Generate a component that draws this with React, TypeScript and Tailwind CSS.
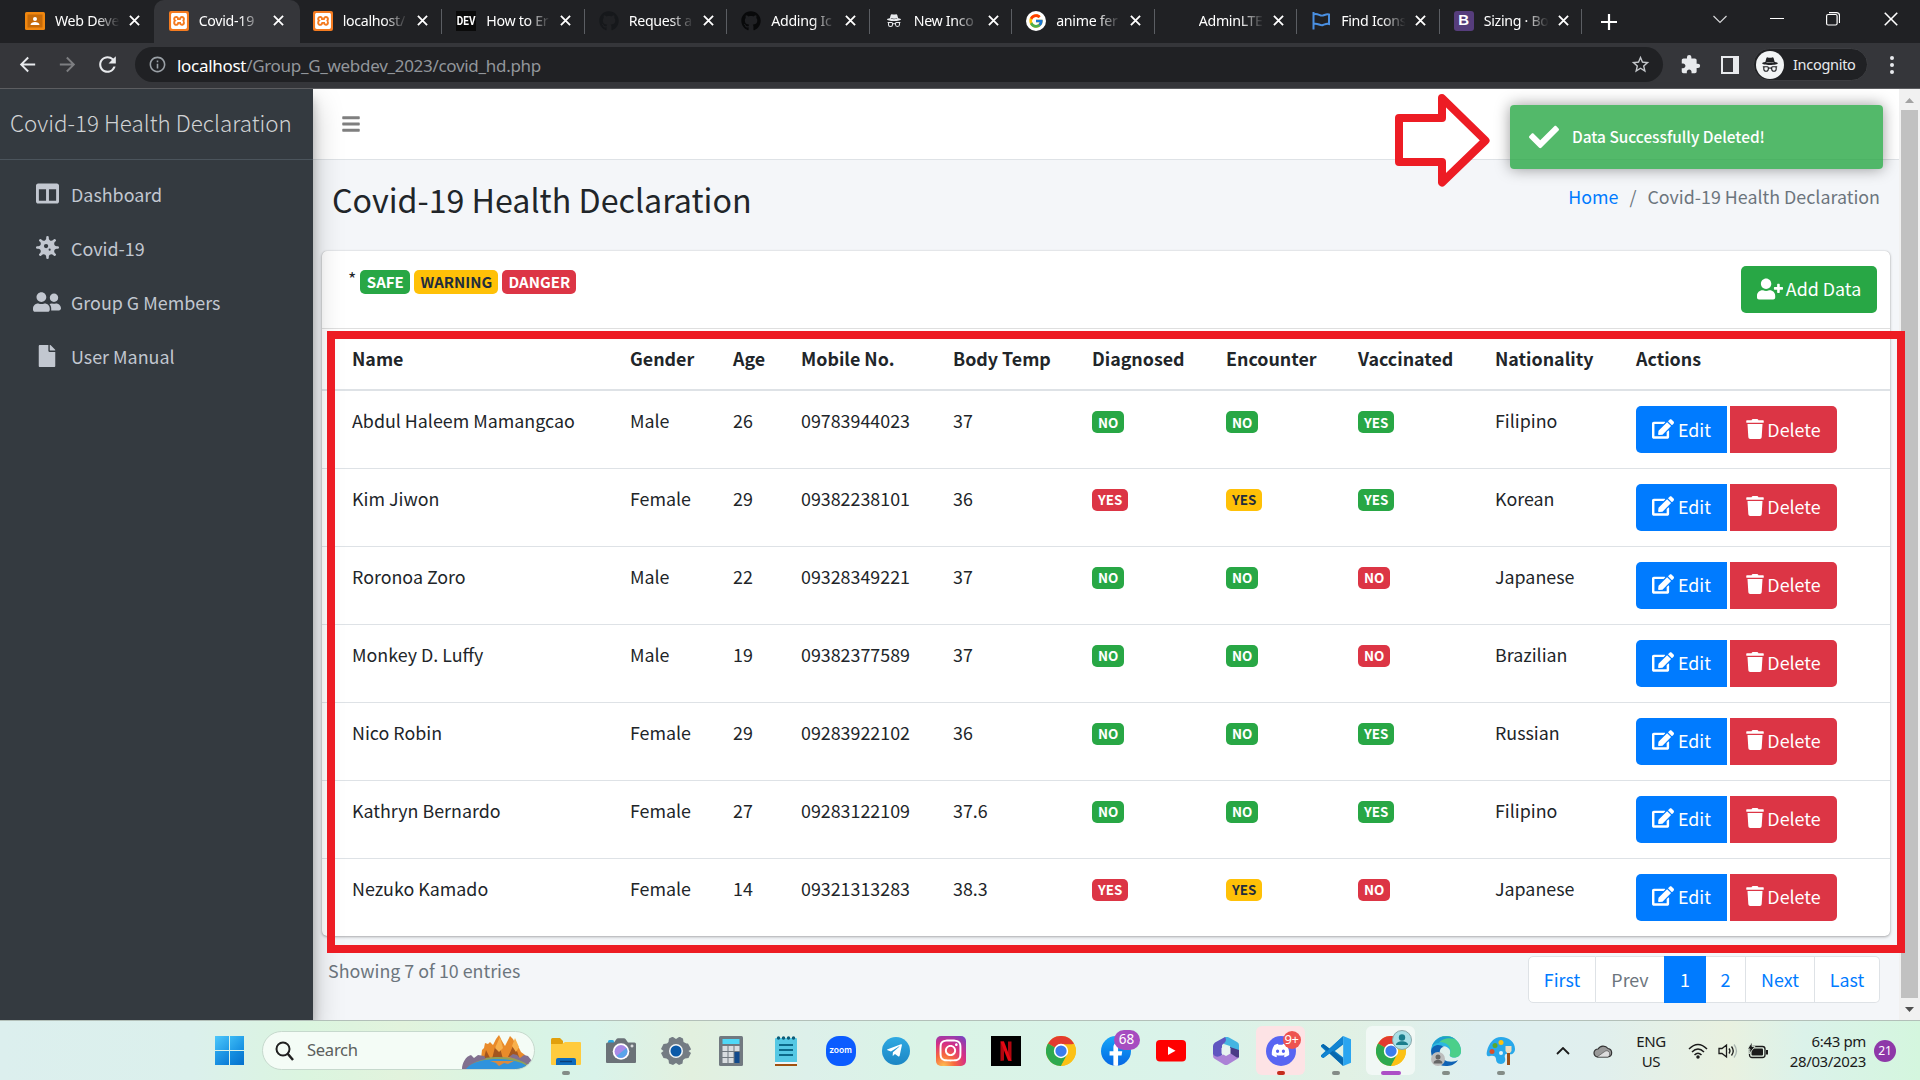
import React from "react";
import { FaBars, FaCheck, FaColumns, FaDiscord, FaEdit, FaFile, FaGithub, FaInstagram, FaTelegramPlane, FaTrash, FaUserFriends, FaUserPlus, FaVirus, FaFacebookF } from "react-icons/fa";
import { FcGoogle } from "react-icons/fc";
import { BsIncognito } from "react-icons/bs";
import { MdExtension, MdStarBorder, MdArrowBack, MdArrowForward, MdRefresh, MdInfoOutline } from "react-icons/md";
import { SiXampp } from "react-icons/si";
import { VscChromeClose } from "react-icons/vsc";

/* ---------- Browser chrome ---------- */

const XamppIcon = () => (
  <span className="flex size-5 items-center justify-center rounded-[2px] bg-[#f47b20]">
    <SiXampp className="size-4 text-white" />
  </span>
);

const tabs: { title: string; icon: React.ReactNode; divider?: boolean; active?: boolean }[] = [
  {
    title: "Web Deve",
    icon: (
      <svg viewBox="0 0 20 20" className="size-5">
        <rect y="1" width="20" height="18" rx="1.5" fill="#f0870f" />
        <rect x="2.5" y="3.500" width="15" height="13" fill="#c66a08" />
        <circle cx="10" cy="8" r="2" fill="#fff" />
        <path d="M5.500 14c0-4 9-4 9 0z" fill="#fff" />
      </svg>
    ),
  },
  { title: "Covid-19", icon: <XamppIcon />, active: true },
  { title: "localhost/", icon: <XamppIcon />, divider: true },
  {
    title: "How to Er",
    icon: (
      <span className="flex size-5 items-center justify-center bg-[#0a0a0a] font-['Liberation_Sans_Narrow','Roboto'] text-[10px] font-bold text-white">
        <span className="scale-y-125">DEV</span>
      </span>
    ),
    divider: true,
  },
  { title: "Request a", icon: <FaGithub className="size-5 text-[#16181b]" />, divider: true },
  { title: "Adding Ic", icon: <FaGithub className="size-5 text-[#08090a]" />, divider: true },
  { title: "New Inco", icon: <BsIncognito className="size-4 text-[#e8eaed]" />, divider: true },
  {
    title: "anime fer",
    icon: (
      <span className="flex size-5 items-center justify-center rounded-full bg-white">
        <FcGoogle className="size-4" />
      </span>
    ),
    divider: true,
  },
  { title: "AdminLTE", icon: null, divider: true },
  {
    title: "Find Icons",
    icon: (
      <svg viewBox="0 0 20 20" className="size-5" fill="none" stroke="#4a90e2" strokeWidth="2">
        <path d="M2.500 1v17.500M2.500 3.500c4-2 6.500 2 9.500 1s3.500-1.500 6-1v9.500c-3-.5-3 0-6 1s-5.500-2.500-9.500-1" />
      </svg>
    ),
    divider: true,
  },
  {
    title: "Sizing · Bo",
    icon: (
      <span className="flex size-5 items-center justify-center rounded-[3px] bg-[#563d7c] font-['Liberation_Sans'] text-[15px] font-bold text-white">B</span>
    ),
    divider: true,
  },
];

function TabStrip() {
  return (
    <div className="flex h-[43px] items-center bg-[#202124] pl-[13px] text-white">
      {tabs.map((t, i) => (
        <div
          key={t.title}
          className={
            "relative flex h-full shrink-0 items-center pb-[2px] " +
            (t.active
              ? "-ml-[2px] w-[146px] rounded-t-[10px] bg-[#35363a] pl-[15px]"
              : i === 0
                ? "w-[142.7px] pl-[12px]"
                : i === 2
                  ? "w-[142.5px] pl-[13px]"
                  : "w-[142.5px] pl-[14px]")
          }
        >
          <span className="flex size-5 shrink-0 items-center justify-center">{t.icon}</span>
          <span className="ml-[10px] w-[66px] overflow-hidden whitespace-nowrap font-['Noto_Sans'] text-[14.2px] tracking-[-0.3px] [mask-image:linear-gradient(to_right,black_62%,transparent_98%)]">
            {t.title}
          </span>
          <svg viewBox="0 0 12 12" className="ml-[8px] size-[11px] shrink-0" stroke="#fff" strokeWidth="2">
            <path d="M1 1l10 10M11 1L1 11" />
          </svg>
          {t.divider && <span className="absolute right-0 top-[9px] h-[25px] w-px bg-[#5b5e63]" />}
        </div>
      ))}
      <svg viewBox="0 0 16 16" className="ml-[19px] size-[16px]" stroke="#fff" strokeWidth="2.200">
        <path d="M8 0v16M0 8h16" />
      </svg>
      <div className="ml-auto mb-[6px] flex items-center pr-[19px]">
        <svg viewBox="0 0 14 14" className="w-[14px]" fill="none" stroke="#d5d6d8" strokeWidth="1.200">
          <path d="M.5 4L7 10.500 13.500 4" />
        </svg>
        <span className="ml-[43px] h-px w-[14px] bg-white" />
        <svg viewBox="0 0 14 14" className="ml-[42px] size-[14px]" fill="none" stroke="#fff" strokeWidth="1.200">
          <rect x=".6" y="2.500" width="10.500" height="10.500" rx="1.500" />
          <path d="M3 .6h7.500c2 0 3 1 3 3V11" />
        </svg>
        <VscChromeClose className="ml-[41px] size-[20px]" />
      </div>
    </div>
  );
}

function Toolbar() {
  return (
    <div className="flex h-[46px] items-center border-b border-[#5c5d60] bg-[#35363a] pb-[3px] pt-px font-['Noto_Sans'] text-[#e8eaed]">
      <MdArrowBack className="ml-[16px] size-[23px]" />
      <MdArrowForward className="ml-[17px] size-[23px] text-[#7d7e81]" />
      <MdRefresh className="ml-[16px] size-[25px]" />
      <div className="ml-[15px] flex h-[35px] w-[1528px] items-center rounded-full bg-[#202124] pl-[13px] pr-[12px]">
        <MdInfoOutline className="size-[19px] text-[#9aa0a6]" />
        <div className="ml-[10px] pt-[2px] text-[17px] leading-none tracking-[-0.3px] text-[#92969b]">
          <span className="text-white">localhost</span>/Group_G_webdev_2023/covid_hd.php
        </div>
        <MdStarBorder className="ml-auto size-[21px] text-[#c4c7cb]" />
      </div>
      <MdExtension className="ml-[17px] size-[21px]" />
      <span className="ml-[20px] flex h-[18px] w-[18px] border-[2.5px] border-r-[6px] border-[#e8eaed]" />
      <div className="ml-[14px] flex h-[33px] w-[115px] items-center rounded-full border border-[#3c3d41] bg-[#202124] pl-[2px]">
        <span className="flex size-[28px] items-center justify-center rounded-full bg-[#f1f3f4] text-[#202124]">
          <BsIncognito className="size-[18px]" />
        </span>
        <span className="ml-[9px] text-[14.5px] tracking-[-0.3px]">Incognito</span>
      </div>
      <div className="ml-[22px] flex flex-col gap-[3px]">
        <span className="size-[4px] rounded-full bg-current" />
        <span className="size-[4px] rounded-full bg-current" />
        <span className="size-[4px] rounded-full bg-current" />
      </div>
    </div>
  );
}

/* ---------- Page ---------- */

const nav = [
  { label: "Dashboard", icon: <FaColumns className="size-[23px]" /> },
  { label: "Covid-19", icon: <FaVirus className="size-[23px]" /> },
  { label: "Group G Members", icon: <FaUserFriends className="size-[28px]" /> },
  { label: "User Manual", icon: <FaFile className="size-[22px]" /> },
];

function Sidebar() {
  return (
    <aside className="relative z-10 flex w-[313px] shrink-0 flex-col bg-[#343a40] text-[#c2c7d0] shadow-[0_14px_28px_rgba(0,0,0,0.25),0_10px_10px_rgba(0,0,0,0.22)]">
      <div className="flex h-[71px] items-center whitespace-nowrap border-b border-[#4b545c] pb-[2px] pl-[10px] text-[22.4px] font-light text-[#d0d2d4]">
        Covid-19 Health Declaration
      </div>
      <nav className="flex flex-col pt-[8px]">
        {nav.map((n) => (
          <div key={n.label} className="flex h-[54px] items-center pl-[29px]">
            <span className="mb-[3px] flex w-[36px] justify-center">{n.icon}</span>
            <span className="mb-[2px] ml-[6px] text-[17.9px]">{n.label}</span>
          </div>
        ))}
      </nav>
    </aside>
  );
}

type Tone = "g" | "y" | "r";
const tones: Record<Tone, string> = {
  g: "bg-[#28a745] text-white",
  y: "bg-[#ffc107] text-[#1f2d3d]",
  r: "bg-[#dc3545] text-white",
};

const rows: [string, string, string, string, string, Tone, Tone, Tone, string][] = [
  ["Abdul Haleem Mamangcao", "Male", "26", "09783944023", "37", "g", "g", "g", "Filipino"],
  ["Kim Jiwon", "Female", "29", "09382238101", "36", "r", "y", "g", "Korean"],
  ["Roronoa Zoro", "Male", "22", "09328349221", "37", "g", "g", "r", "Japanese"],
  ["Monkey D. Luffy", "Male", "19", "09382377589", "37", "g", "g", "r", "Brazilian"],
  ["Nico Robin", "Female", "29", "09283922102", "36", "g", "g", "g", "Russian"],
  ["Kathryn Bernardo", "Female", "27", "09283122109", "37.6", "g", "g", "g", "Filipino"],
  ["Nezuko Kamado", "Female", "14", "09321313283", "38.3", "r", "y", "r", "Japanese"],
];

const heads = ["Name", "Gender", "Age", "Mobile No.", "Body Temp", "Diagnosed", "Encounter", "Vaccinated", "Nationality", "Actions"];

function Badge({ tone, children }: { tone: Tone; children: React.ReactNode }) {
  return (
    <span className={"mt-[2px] flex h-[22px] w-fit items-center rounded-[5px] px-[6px] pt-px text-[13.4px] font-bold leading-none " + tones[tone]}>
      {children}
    </span>
  );
}

function DataTable() {
  return (
    <table className="w-full table-fixed border-collapse text-left text-[17.85px] leading-[30px]">
      <colgroup>
        <col className="w-[293px]" />
        <col className="w-[103px]" />
        <col className="w-[68px]" />
        <col className="w-[152px]" />
        <col className="w-[139px]" />
        <col className="w-[134px]" />
        <col className="w-[132px]" />
        <col className="w-[137px]" />
        <col className="w-[141px]" />
        <col />
      </colgroup>
      <thead>
        <tr className="h-[61px] border-b-2 border-[#dee2e6]">
          {heads.map((h) => (
            <th key={h} className="pl-[15px] align-top pt-[14px] font-bold first:pl-[30px]">
              {h}
            </th>
          ))}
        </tr>
      </thead>
      <tbody>
        {rows.map(([name, gender, age, mobile, temp, d, e, v, nat]) => (
          <tr key={name} className="h-[78px] border-t border-[#dee2e6] align-top">
            <td className="pl-[30px] pt-[14px]">{name}</td>
            <td className="pl-[15px] pt-[14px]">{gender}</td>
            <td className="pl-[15px] pt-[14px]">{age}</td>
            <td className="pl-[15px] pt-[14px]">{mobile}</td>
            <td className="pl-[15px] pt-[14px]">{temp}</td>
            <td className="pl-[15px] pt-[18px]"><Badge tone={d}>{d === "g" ? "NO" : "YES"}</Badge></td>
            <td className="pl-[15px] pt-[18px]"><Badge tone={e}>{e === "g" ? "NO" : "YES"}</Badge></td>
            <td className="pl-[15px] pt-[18px]"><Badge tone={v}>{v === "g" ? "YES" : "NO"}</Badge></td>
            <td className="pl-[15px] pt-[14px]">{nat}</td>
            <td className="pl-[15px] pt-[15px]">
              <div className="flex gap-[3px] text-white">
                <button className="flex h-[47px] w-[91px] items-center justify-center gap-[4px] rounded-l-[5px] bg-[#007bff] pb-[2px]">
                  <FaEdit className="size-[22px]" />Edit
                </button>
                <button className="flex h-[47px] w-[107px] items-center justify-center gap-[3px] rounded-r-[5px] bg-[#dc3545] pb-[2px]">
                  <FaTrash className="h-[20px] w-[18px]" />Delete
                </button>
              </div>
            </td>
          </tr>
        ))}
      </tbody>
    </table>
  );
}

function Content() {
  return (
    <main className="flex min-w-0 flex-1 flex-col bg-[#f4f6f9] text-[17.85px] text-[#212529]">
      <header className="flex h-[71px] shrink-0 items-center border-b border-[#dee2e6] bg-white pl-[28px]">
        <FaBars className="size-[20px] text-[#7f7f7f]" />
      </header>
      <div className="flex h-[91px] items-start justify-between pl-[19px] pr-[19px] pt-[17px]">
        <h1 className="text-[32.2px] leading-[44px]">Covid-19 Health Declaration</h1>
        <div className="flex gap-[11px] leading-[38px] text-[#6c757d]">
          <span className="text-[#007bff]">Home</span>
          <span>/</span>
          <span>Covid-19 Health Declaration</span>
        </div>
      </div>
      <section className="ml-[9px] w-[1568px] rounded-[5px] bg-white shadow-[0_0_1px_rgba(0,0,0,0.25),0_1px_3px_rgba(0,0,0,0.3)]">
        <div className="flex h-[78px] items-start border-b border-[#dfdfdf] pl-[26px] pr-[13px] pt-[15px]">
          <span className="mr-[4px] -mt-[3px] leading-[30px]">*</span>
          <div className="mt-[4px] flex gap-[4px] text-[15px] font-bold leading-none">
            <span className="flex h-[24px] w-[50px] items-center justify-center rounded-[5px] bg-[#28a745] pb-px text-white">SAFE</span>
            <span className="flex h-[24px] w-[84px] items-center justify-center rounded-[5px] bg-[#ffc107] pb-px text-[#1f2d3d]">WARNING</span>
            <span className="flex h-[24px] w-[74px] items-center justify-center rounded-[5px] bg-[#dc3545] pb-px text-white">DANGER</span>
          </div>
          <button className="ml-auto flex h-[47px] w-[136px] items-center justify-center gap-[3px] rounded-[5px] bg-[#28a745] pb-[2px] text-white">
            <FaUserPlus className="size-[26px]" />Add Data
          </button>
        </div>
        <DataTable />
      </section>
      <div className="flex justify-between pl-[15px] pr-[19px] pt-[20px]">
        <span className="-mt-[2px] leading-[32px] text-[#6c757d]">Showing 7 of 10 entries</span>
        <div className="flex h-[47px] text-[#007bff]">
          <span className="flex w-[68px] items-center justify-center rounded-l-[5px] border border-[#dee2e6] bg-white">First</span>
          <span className="flex w-[68px] items-center justify-center border-y border-[#dee2e6] bg-white text-[#6c757d]">Prev</span>
          <span className="flex w-[42px] items-center justify-center bg-[#007bff] text-white">1</span>
          <span className="flex w-[40px] items-center justify-center border-y border-r border-[#dee2e6] bg-white">2</span>
          <span className="flex w-[69px] items-center justify-center border-y border-r border-[#dee2e6] bg-white">Next</span>
          <span className="flex w-[65px] items-center justify-center rounded-r-[5px] border-y border-r border-[#dee2e6] bg-white">Last</span>
        </div>
      </div>
    </main>
  );
}

function Scrollbar() {
  return (
    <div className="flex w-[21px] flex-col items-center bg-[#f1f1f1]">
      <svg viewBox="0 0 21 21" className="h-[21px] w-[21px]"><path d="M6 14l4.500-5 4.500 5z" fill="#a3a3a3" /></svg>
      <div className="h-[888px] w-[17px] bg-[#c1c1c1]" />
      <svg viewBox="0 0 21 21" className="h-[21px] w-[21px]"><path d="M6 9l4.500 5L15 9z" fill="#505050" /></svg>
    </div>
  );
}

/* ---------- Taskbar ---------- */

const ChromeIcon = () => (
  <svg viewBox="0 0 48 48" className="size-[30px]">
    <circle cx="24" cy="24" r="24" fill="#fbc116" />
    <path d="M24 24L3.200 12A24 24 0 0 1 44.800 12z" fill="#e33b2e" />
    <path d="M24 24L3.200 12A24 24 0 0 0 24 48L34.400 30z" fill="#2da94f" />
    <path d="M24 13h21.300A24 24 0 0 1 24 48l9.500-18.500z" fill="#fbc116" />
    <circle cx="24" cy="24" r="11.500" fill="#fff" />
    <circle cx="24" cy="24" r="9" fill="#3b7ded" />
  </svg>
);

const apps: { id: string; icon: React.ReactNode; dot?: string; tile?: string; badge?: React.ReactNode }[] = [
  {
    id: "explorer",
    dot: "w-[8px] bg-[#848c87]",
    icon: (
      <svg viewBox="0 0 30 30" className="size-[30px]">
        <path d="M0 3.500Q0 2 1.500 2H9l3 3v6H0z" fill="#e2a00c" />
        <path d="M0 8h11l3-2h15q1 0 1 1v21q0 1-1 1H1q-1 0-1-1z" fill="#ffcb3d" />
        <path d="M5 29v-5q0-2 2-2h16q2 0 2 2v5z" fill="#0f6cbd" />
        <path d="M9 25.500h12" stroke="#0a3f78" strokeWidth="1.500" />
      </svg>
    ),
  },
  {
    id: "camera",
    icon: (
      <svg viewBox="0 0 30 30" className="size-[30px]">
        <rect x="2" y="4" width="6" height="4" rx="1.500" fill="#2aa7e0" />
        <path d="M0 8q0-1.500 1.500-1.500H8L10.500 3q.5-.7 1.500-.7h6q1 0 1.500.7L22 6.500h6.500Q30 6.500 30 8v18q0 1-1 1H1q-1 0-1-1z" fill="#6b7278" />
        <circle cx="15" cy="15.500" r="8.300" fill="#fff" />
        <circle cx="15" cy="15.500" r="6.500" fill="#a98ae6" />
        <path d="M10.500 20a6.500 6.500 0 0 0 10-8z" fill="#5aa4ea" />
        <path d="M26 8.500v3M24.500 10h3" stroke="#fff" />
      </svg>
    ),
  },
  {
    id: "settings",
    icon: (
      <svg viewBox="0 0 30 30" className="size-[30px]">
        <path d="M11 1h1l3 2 3-2h1l3 1.500.5 3.500 3 1.500h1.500L29.500 12l.5 1.500-2.500 1.500 2.500 2-2.500 5-3.500.5-2 1.500-.5 3.500L18 29l-3-2-3 2-4-1.500-.5-3.500-2-1.500L2.500 22 0 17l2.500-2L0 13l2.500-5L6 7.500 7.500 6 8 2.500z" fill="#747c83" />
        <circle cx="15" cy="15" r="7" fill="#f2f5f6" />
        <circle cx="15" cy="15" r="5.500" fill="#0a59a8" />
      </svg>
    ),
  },
  {
    id: "calculator",
    icon: (
      <svg viewBox="0 0 24 30" className="h-[30px] w-[24px]">
        <rect width="24" height="30" rx="1.500" fill="#717980" />
        <rect x="3.500" y="3" width="17" height="5" fill="#4fd8f7" />
        <g fill="#d9dde0">
          <path d="M3.500 10h5v5h-5zM9.500 10h5v5h-5zM15.500 10h5v5h-5zM3.500 16h5v5h-5zM9.500 16h5v5h-5zM3.500 22h5v5h-5zM9.500 22h5v5h-5z" />
        </g>
        <path d="M15.500 16h5v11h-5z" fill="#124a8c" />
      </svg>
    ),
  },
  {
    id: "notepad",
    icon: (
      <svg viewBox="0 0 22 30" className="h-[30px] w-[22px]">
        <rect y="2" width="22" height="25" rx="1" fill="#55c8e4" />
        <path d="M0 26h22v2H0z" fill="#f2f5f6" />
        <path d="M0 28h22v2H0z" fill="#a0500f" />
        <g fill="#0c5c78"><circle cx="3.500" cy="2" r="1.700" /><circle cx="8.500" cy="2" r="1.700" /><circle cx="13.500" cy="2" r="1.700" /><circle cx="18.500" cy="2" r="1.700" /></g>
        <path d="M4 9h14M4 14h14M4 19h14" stroke="#0c6a8a" strokeWidth="2" />
      </svg>
    ),
  },
  {
    id: "zoom",
    icon: <span className="flex size-[30px] items-center justify-center rounded-[13px] bg-[#0b5cff] font-['Inter'] text-[8.500px] font-semibold leading-none text-white">zoom</span>,
  },
  {
    id: "telegram",
    icon: <span className="flex size-[28px] items-center justify-center rounded-full bg-linear-to-b from-[#2fa9e2] to-[#1c86c4]"><FaTelegramPlane className="mr-[2px] size-[17px] text-white" /></span>,
  },
  {
    id: "instagram",
    icon: <span className="flex size-[30px] items-center justify-center rounded-[5px] bg-[radial-gradient(circle_at_25%_100%,#fdc04f_0%,#f7663f_30%,#d62f86_60%,#6b45c9_100%)]"><FaInstagram className="size-[25px] text-white" /></span>,
  },
  {
    id: "netflix",
    icon: (
      <svg viewBox="0 0 30 30" className="size-[30px]">
        <rect width="30" height="30" fill="#000" />
        <path d="M9.500 5.500h3.500v19l-3.500.5zM17 5.500h3.500V25l-3.500-.5z" fill="#b1060f" />
        <path d="M9.500 5.500H13l7.500 19.500-3.500-.5z" fill="#e50914" />
      </svg>
    ),
  },
  { id: "chrome", icon: <ChromeIcon /> },
  {
    id: "facebook",
    icon: <span className="flex size-[30px] items-end justify-center overflow-hidden rounded-full bg-linear-to-b from-[#1aa7f8] to-[#0a66e4]"><FaFacebookF className="size-[24px] text-white" /></span>,
    badge: <span className="absolute right-[-9px] top-[-6px] flex h-[20px] w-[26px] items-center justify-center rounded-full bg-[#a64cc0] text-[13.5px] leading-none text-white">68</span>,
  },
  {
    id: "youtube",
    icon: (
      <svg viewBox="0 0 30 22" className="h-[22px] w-[30px]">
        <rect width="30" height="21.500" rx="4" fill="#f00" />
        <path d="M12 6.500l7.500 4.300L12 15z" fill="#fff" />
      </svg>
    ),
  },
  {
    id: "office",
    icon: (
      <svg viewBox="0 0 26 28" className="h-[28px] w-[26px]">
        <path d="M12 0q2-.5 4 .5l8 4.500q2 1 2 3v8l-9-4V9l-6-2z" fill="#45b5e2" />
        <path d="M12 0Q15 4 9 8v10l-3 3q-4 0-6-3V9q0-2 2-3.500z" fill="#5f55c0" />
        <path d="M0 17q3 5 9 1l8-4 9 3v3q0 1-2 2l-9 5.500q-2 1-4 0L2 22Q0 21 0 19z" fill="#ab82d6" />
        <path d="M17 10l9 3v7q-1 1-3 0l-6-4z" fill="#4a3a86" />
        <path d="M13 8.500l4.500 2.500v5.500L13 19 8.500 16.500V11z" fill="#e7f3f0" />
      </svg>
    ),
  },
  {
    id: "discord",
    tile: "bg-[#fde3e5]",
    dot: "w-[8px] bg-[#c42b1c]",
    icon: <span className="flex size-[30px] items-center justify-center rounded-full bg-[#5865f2]"><FaDiscord className="size-[19px] text-white" /></span>,
    badge: <span className="absolute right-[-5px] top-[-5px] flex size-[18px] items-center justify-center rounded-full bg-[#ee5350] text-[13px] leading-none tracking-[-0.5px] text-white">9+</span>,
  },
  {
    id: "vscode",
    dot: "w-[8px] bg-[#848c87]",
    icon: (
      <svg viewBox="0 0 100 100" className="size-[30px]">
        <path d="M74 0L28 42 8 27 0 31v38l8 4 20-15 46 42V72L46 50l28-22z" fill="#0a7cc8" />
        <path d="M0 31l8-4 66 50v23z" fill="#0868ae" />
        <path d="M0 69l8 4 66-50V0z" fill="#1284d2" />
        <path d="M0 36v28l15-14z" fill="#dff1ea" />
        <path d="M74 0l26 11v78l-26 11z" fill="#2aa5f0" />
      </svg>
    ),
  },
  {
    id: "chrome-active",
    tile: "bg-[#f1f8f5]",
    dot: "w-[20px] bg-[#ac4fc6]",
    icon: <ChromeIcon />,
    badge: (
      <svg viewBox="0 0 20 20" className="absolute right-[-6px] top-[-6px] size-[20px]">
        <circle cx="10" cy="10" r="9.500" fill="#a9dfe6" stroke="#8aa6a8" />
        <circle cx="10" cy="7.500" r="3.200" fill="#1a7d8c" />
        <path d="M4 15c0-5 12-5 12 0z" fill="#1a7d8c" />
      </svg>
    ),
  },
  {
    id: "edge",
    dot: "w-[8px] bg-[#848c87]",
    icon: (
      <svg viewBox="0 0 30 30" className="size-[30px]">
        <path d="M0 15a15 15 0 0 1 30 0c0 5-4 6.500-7 6.500s-5-1.500-4-3.500c1.500-5-3-8-8-8S1 12 0 15z" fill="#2bb7e0" />
        <path d="M13 0c10-1 17 7 17 15 0 5-4 6.500-7 6.500s-5-1.500-4-3.500c2-9-4-12-12-12 2-4 4-5.500 6-6z" fill="#4bcf8a" />
        <path d="M1 10C4 1 16-3 24 3 18 1 10 3 8 7c-3 0-5 1-7 3z" fill="#1f9fd0" />
        <path d="M0 15c1-6 8-8 13-4-5 0-6 8-1 12s12 3 15 1c-3 5-8 6-12 6C6 30 0 23 0 15z" fill="#0f62b4" />
      </svg>
    ),
    badge: (
      <svg viewBox="0 0 14 14" className="absolute bottom-0 left-0 size-[14px]">
        <circle cx="7" cy="7" r="7" fill="#bdbdbd" />
        <circle cx="7" cy="5" r="2.500" fill="#666" />
        <path d="M2.500 11.500c0-5 9-5 9 0z" fill="#666" />
      </svg>
    ),
  },
  {
    id: "paint",
    dot: "w-[8px] bg-[#848c87]",
    icon: (
      <svg viewBox="0 0 30 30" className="size-[30px]">
        <path d="M15 1c8 0 14 5 14 12 0 4-3 6-6 5s-5 0-4 4c1 3-1 6-4 6-4 0-5-3-5-5 0-3-3-4-6-3s-4-1-3-5C3 7 8 1 15 1z" fill="#28a8ea" />
        <circle cx="15" cy="6.500" r="2.500" fill="#ffc20e" /><circle cx="9" cy="9.500" r="2.500" fill="#5aa82c" /><circle cx="6" cy="15.500" r="2.500" fill="#d9502b" />
        <circle cx="15" cy="17" r="2" fill="#e4f3f3" />
        <path d="M19.500 10h6v5l-1.500 2h-3l-1.500-2z" fill="#f0dcbc" />
        <path d="M21 17h3v12h-3z" fill="#9b4f17" />
      </svg>
    ),
  },
];

function Taskbar() {
  return (
    <footer className="flex h-[60px] items-center border-t border-[#b3c0b9] bg-[linear-gradient(90deg,#dcefee_0%,#dbf0ec_10%,#dbf5df_16%,#e2f3dd_21%,#d9f5e2_26%,#d9f3ea_31%,#e2f0df_36%,#ddf0ea_42%,#daf4e6_48%,#daf3ea_62%,#e1f1e4_70%,#deeff0_77%,#e0efee_83%,#e9f1e0_90%,#dbf2ea_94%,#d4f6de_100%)] font-['Noto_Sans'] text-[#1b1b1b]">
      <div className="ml-[215px] grid size-[29px] grid-cols-2 gap-px">
        <span className="bg-linear-to-br from-[#4cc8fb] to-[#1f9ae6]" />
        <span className="bg-linear-to-br from-[#3bbaf4] to-[#128de0]" />
        <span className="bg-linear-to-br from-[#28a5ec] to-[#0a7bd6]" />
        <span className="bg-linear-to-br from-[#1793e3] to-[#0670cc]" />
      </div>
      <div className="ml-[18px] flex h-[39px] w-[273px] items-center overflow-hidden rounded-full border border-[#c6d9cd] bg-[#f4fcf6]">
        <svg viewBox="0 0 20 20" className="ml-[12px] size-[20px]" fill="none" stroke="#202020" strokeWidth="2">
          <circle cx="8" cy="8" r="6.500" />
          <path d="M12.500 12.500L18 19" strokeWidth="2.500" />
        </svg>
        <span className="ml-[12px] text-[16.6px] tracking-[-0.3px] text-[#5c605d]">Search</span>
        <svg viewBox="0 0 70 37" className="ml-auto mr-[2px] h-[37px] w-[70px]">
          <path d="M19 27l1-9 2-2 1-5 3 1 2-2 3 3 3-6 3-4 3 6 3 5 2-4 3-6 3 3 3 6 3 3 2 4 4 3 3 6z" fill="#e98b2a" />
          <path d="M30 27l3-12 5 1 3 11zM46 25l5-11 3 2 3 9zM22 26l2-8 4 8z" fill="#a3561f" />
          <path d="M33 16l5-11 3 11-4 4zM50 14l3-8 4 9-3 5z" fill="#f8b04c" />
          <path d="M1 37c4-8 20-12 35-12s27 4 31 6c0 2-2 4-5 6z" fill="#8fa05b" />
          <path d="M2 37c10-8 22-10 34-10s24 3 29 7l-3 3z" fill="#2f93dd" />
          <path d="M28 29h24l-6 3-4-1-5 3-3-3z" fill="#d98a40" />
          <path d="M0 37c0-6 4-13 9-14l3 3 4-3 6 1 2 3C14 29 8 32 4 37z" fill="#81708f" />
          <path d="M47 25l4-3 4 1 3 3 4-3 4 1 4 5-4 4c-5-4-12-6-19-8z" fill="#81708f" />
        </svg>
      </div>
      <div className="ml-[3px] flex h-full">
        {apps.map((a) => (
          <div key={a.id} className="flex w-[55px] justify-center">
            <div className={"relative mt-[5px] flex h-[49px] w-[49px] items-center justify-center rounded-[6px] " + (a.tile ?? "")}>
              <div className="relative flex size-[30px] items-center justify-center">
                {a.icon}
                {a.badge}
              </div>
              {a.dot && <span className={"absolute bottom-0 h-[4px] rounded-full " + a.dot} />}
            </div>
          </div>
        ))}
      </div>
      <div className="ml-auto flex items-center">
        <svg viewBox="0 0 14 8" className="w-[14px]" fill="none" stroke="#1b1b1b" strokeWidth="1.800"><path d="M1 7l6-6 6 6" /></svg>
        <svg viewBox="0 0 20 14" className="ml-[23px] w-[20px]" stroke="#333" strokeWidth="1.200">
          <path d="M5 13a4 4 0 0 1 0-8 6 6 0 0 1 10-.5 4.300 4.300 0 0 1 0 8.500z" fill="#999" />
          <path d="M4 13l7-5q2-2 4-1a3.500 3.500 0 0 1 0 6z" fill="#ddd" strokeWidth=".5" />
        </svg>
        <div className="ml-[22px] w-[32px] text-center text-[15px] leading-[20px] tracking-[-0.4px]">ENG<br />US</div>
        <svg viewBox="0 0 20 16" className="ml-[21px] w-[20px]" fill="none" stroke="#1b1b1b" strokeWidth="1.500">
          <path d="M1 6q9-9 18 0M4 9q6-6 12 0M6.500 12q3.500-3.500 7 0" /><circle cx="10" cy="14" r="1" fill="#1b1b1b" />
        </svg>
        <svg viewBox="0 0 20 16" className="ml-[10px] w-[20px]" fill="none" stroke="#1b1b1b" strokeWidth="1.300">
          <path d="M1 5.500h3L8.500 2v12L4 10.500H1zM11 5.500q2 2.500 0 5M13.500 3.500q3.500 4.500 0 9" /><path d="M16 1.500q5 6.500 0 13" stroke="#aab5b0" />
        </svg>
        <svg viewBox="0 0 20 16" className="ml-[10px] w-[20px]">
          <rect x="1.500" y="3.500" width="15.500" height="11" rx="2.500" fill="none" stroke="#1b1b1b" strokeWidth="1.300" />
          <rect x="3.500" y="5.500" width="11.500" height="7" rx="1" fill="#1b1b1b" />
          <path d="M18 7h2v4.500h-2z" fill="#1b1b1b" />
          <path d="M4-1L-.5 6H2L1 11l6-7.500H4z" fill="#1b1b1b" stroke="#e3f1e4" strokeWidth=".8" />
        </svg>
        <div className="ml-[14px] w-[84px] whitespace-nowrap text-right text-[15px] leading-[20px] tracking-[-0.35px]">
          6:43 pm<br />28/03/2023
        </div>
        <span className="ml-[8px] mr-[24px] flex size-[22px] items-center justify-center rounded-full bg-[#8e38a8] text-[12px] leading-none text-white">21</span>
      </div>
    </footer>
  );
}

/* ---------- Overlays ---------- */

function Toast() {
  return (
    <div className="absolute left-[1510px] top-[105px] z-20 flex h-[64px] w-[373px] items-center rounded-[4px] bg-[#28a745]/80 pl-[19px] text-white shadow-[0_0_15px_rgba(0,0,0,0.4)]">
      <FaCheck className="size-[30px]" />
      <span className="ml-[13px] text-[15.4px] font-medium">Data Successfully Deleted!</span>
    </div>
  );
}

export default function App() {
  return (
    <div className="relative flex h-[1080px] w-[1920px] flex-col overflow-hidden font-['Noto_Sans_CJK_SC',sans-serif]">
      <TabStrip />
      <Toolbar />
      <div className="flex min-h-0 flex-1 overflow-hidden">
        <Sidebar />
        <Content />
        <Scrollbar />
      </div>
      <Taskbar />
      <Toast />
      <svg viewBox="0 0 100 100" className="absolute left-[1392px] top-[90px] z-20 size-[100px]" fill="#fff" stroke="#ed1c24" strokeWidth="8" strokeLinejoin="round">
        <path d="M7 28h43V8l43.500 42.500L50 92.500V72H7z" />
      </svg>
      <div className="absolute left-[327px] top-[331px] z-20 h-[622px] w-[1578px] border-8 border-[#ed1c24]" />
    </div>
  );
}
